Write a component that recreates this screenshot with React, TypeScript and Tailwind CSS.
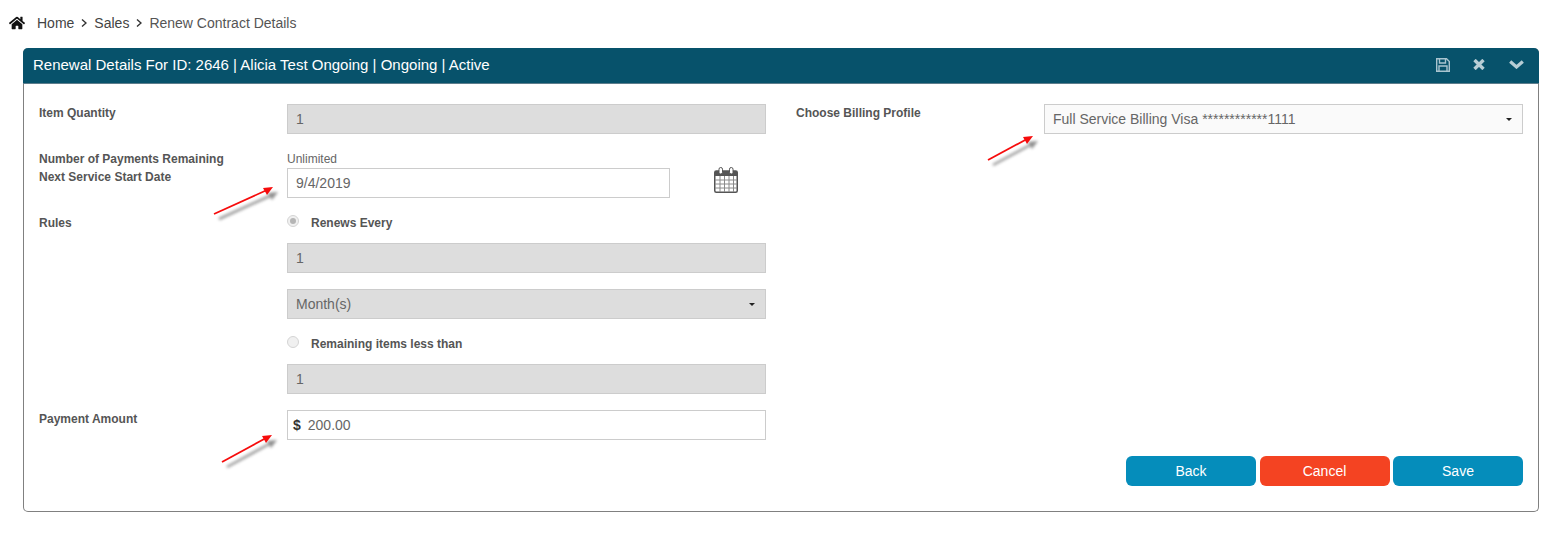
import { FaHome } from "react-icons/fa";

function TextBox({ value, disabled, className = "" }: { value: string; disabled?: boolean; className?: string }) {
  return (
    <div
      className={`flex h-[30px] items-center border border-[#cccccc] px-2 text-sm text-[#666666] ${
        disabled ? "bg-[#dddddd]" : "bg-white"
      } ${className}`}
    >
      {value}
    </div>
  );
}

function SelectBox({ value, bg, className = "" }: { value: string; bg: string; className?: string }) {
  return (
    <div className={`flex h-[30px] items-center justify-between border border-[#cccccc] pl-2 pr-[10px] text-sm text-[#666666] ${bg} ${className}`}>
      <span>{value}</span>
      <span className="h-0 w-0 border-x-[3px] border-t-[3px] border-x-transparent border-t-[#222222]" />
    </div>
  );
}

function Radio({ checked }: { checked?: boolean }) {
  return (
    <span className="flex h-[12px] w-[12px] items-center justify-center rounded-full border border-[#d4d4d4] bg-[#f0f0f0]">
      {checked ? <span className="h-[6px] w-[6px] rounded-full bg-[#b5b5b5]" /> : null}
    </span>
  );
}

// dx, dy: distance from the tail of the annotation arrow to its tip
function Arrow({ dx, dy, className }: { dx: number; dy: number; className: string }) {
  const tipX = 4 + dx;
  const tipY = 4;
  const tailY = 4 + dy;
  const line = `M4 ${tailY} L${tipX - 6} ${tipY + 3}`;
  const head = `M${tipX - 10} ${tipY + 1} L${tipX} ${tipY} L${tipX - 6} ${tipY + 8} Z`;
  return (
    <svg className={`absolute ${className}`} width={dx + 16} height={dy + 16} viewBox={`0 0 ${dx + 16} ${dy + 16}`} fill="none">
      <g className="blur-[1.5px]" transform="translate(5 5)" opacity="0.6">
        <path d={line} stroke="#555555" strokeWidth="2.5" />
        <path d={head} fill="#444444" />
      </g>
      <path d={line} stroke="#f60c0c" strokeWidth="1.8" />
      <path d={head} fill="#f60c0c" />
    </svg>
  );
}

function CalendarIcon() {
  return (
    <svg width="24" height="26" viewBox="0 0 24 26" fill="none">
      <rect x="0.750" y="4" width="22.500" height="21.250" rx="1.500" stroke="#555555" strokeWidth="1.500" />
      <rect x="1" y="4" width="22" height="5" fill="#555555" />
      <path d="M1 13h22M1 17h22M1 21h22M6 9v16M10.500 9v16M15 9v16M19.500 9v16" stroke="#8a8a8a" strokeWidth="1" />
      <rect x="5" y="0.500" width="3.500" height="6.500" rx="1.700" fill="#ffffff" stroke="#555555" />
      <rect x="15.500" y="0.500" width="3.500" height="6.500" rx="1.700" fill="#ffffff" stroke="#555555" />
    </svg>
  );
}

function Crumb() {
  return (
    <svg className="mx-[7px] mt-[6px]" width="6" height="8" viewBox="0 0 6 8" fill="none" stroke="#333333" strokeWidth="1.400">
      <path d="M1 0.500 L5 4 L1 7.500" />
    </svg>
  );
}

export default function App() {
  return (
    <div className="relative min-h-[535px] bg-white font-['Liberation_Sans',Arial,sans-serif]">
      <div className="flex h-[48px] items-start pl-[9px] pt-[13px] text-sm text-[#444444]">
        <FaHome className="mt-[2px] h-[16px] w-[16px] text-[#111111]" />
        <span className="ml-[12px]">Home</span>
        <Crumb />
        <span>Sales</span>
        <Crumb />
        <span className="text-[#555555]">Renew Contract Details</span>
      </div>

      <div className="mx-[23px] w-[1516px] rounded-[5px] border border-[#808080] border-t-0">
        <div className="-mx-px flex h-[36px] items-center justify-between rounded-t-[5px] border-b border-[#5d7d8c] bg-[#07526b] pl-[10px] pr-[15px] text-[15px] text-white">
          <span>Renewal Details For ID: 2646 | Alicia Test Ongoing | Ongoing | Active</span>
          <div className="mb-[2px] flex items-center">
            <svg width="14" height="14" viewBox="0 0 14 14" fill="none" stroke="#a9c4cf" strokeWidth="1.400">
              <path d="M0.700 0.700 H10.500 L13.300 3.500 V13.300 H0.700 Z" />
              <path d="M3.500 0.700 V5 H9.500 V0.700 M3 13.300 V8 H11 V13.300" />
            </svg>
            <svg className="ml-[23px]" width="12" height="11" viewBox="0 0 12 11" fill="none" stroke="#b7cdd5" strokeWidth="3.400">
              <path d="M1.500 1 L10.500 10 M10.500 1 L1.500 10" />
            </svg>
            <svg className="ml-[24px]" width="15" height="9" viewBox="0 0 15 9" fill="none" stroke="#b7cdd5" strokeWidth="3.200">
              <path d="M1.200 1.500 L7.500 7 L13.800 1.500" />
            </svg>
          </div>
        </div>

        <div className="flex pb-[25px] pl-[15px] pr-[15px] pt-[20px]">
          <div className="w-[727px] pb-[46px]">
            <div className="flex">
              <div className="w-[248px] pt-[2px] text-xs font-bold leading-[14px] text-[#555555]">Item Quantity</div>
              <TextBox value="1" disabled className="w-[479px]" />
            </div>

            <div className="mt-[17px] flex">
              <div className="-mt-px w-[248px] text-xs font-bold leading-[18px] text-[#555555]">
                <div>Number of Payments Remaining</div>
                <div>Next Service Start Date</div>
              </div>
              <div>
                <div className="h-[17px] text-xs leading-[16px] text-[#666666]">Unlimited</div>
                <div className="flex w-[479px]">
                  <TextBox value="9/4/2019" className="w-[383px]" />
                  <span className="-mt-px ml-[44px] h-[26px]">
                    <CalendarIcon />
                  </span>
                </div>
              </div>
            </div>

            <div className="mt-[17px] flex">
              <div className="w-[248px] pt-[1px] text-xs font-bold leading-[14px] text-[#555555]">Rules</div>
              <div className="w-[479px]">
                <div className="flex h-[14px] items-start text-xs font-bold text-[#555555]">
                  <Radio checked />
                  <span className="ml-[12px] mt-px leading-[14px]">Renews Every</span>
                </div>
                <TextBox value="1" disabled className="mt-[14px]" />
                <SelectBox value="Month(s)" bg="bg-[#dddddd]" className="mt-[16px]" />
                <div className="mt-[17px] flex h-[14px] items-start text-xs font-bold text-[#555555]">
                  <Radio />
                  <span className="ml-[12px] mt-px leading-[14px]">Remaining items less than</span>
                </div>
                <TextBox value="1" disabled className="mt-[14px]" />
              </div>
            </div>

            <div className="mt-[16px] flex">
              <div className="w-[248px] pt-[2px] text-xs font-bold leading-[14px] text-[#555555]">Payment Amount</div>
              <div className="flex h-[30px] w-[479px] items-center border border-[#cccccc] bg-white pl-[5px] text-sm text-[#666666]">
                <span className="mr-[7px] font-bold text-[#333333]">$</span>
                200.00
              </div>
            </div>
          </div>

          <div className="ml-[30px] flex w-[727px] flex-col justify-between">
            <div className="flex">
              <div className="w-[248px] pt-[2px] text-xs font-bold leading-[14px] text-[#555555]">Choose Billing Profile</div>
              <SelectBox value="Full Service Billing Visa ************1111" bg="bg-[#fafafa]" className="w-[479px]" />
            </div>
            <div className="flex justify-end gap-[3.500px] text-sm text-white">
              <button className="h-[30px] w-[130px] rounded-[6px] bg-[#058dbb]">Back</button>
              <button className="h-[30px] w-[130px] rounded-[6px] bg-[#f44322]">Cancel</button>
              <button className="h-[30px] w-[130px] rounded-[6px] bg-[#058dbb]">Save</button>
            </div>
          </div>
        </div>
      </div>

      <Arrow dx={59} dy={27} className="left-[210px] top-[183px]" />
      <Arrow dx={45} dy={24} className="left-[984px] top-[132px]" />
      <Arrow dx={50} dy={27} className="left-[218px] top-[431px]" />
    </div>
  );
}
